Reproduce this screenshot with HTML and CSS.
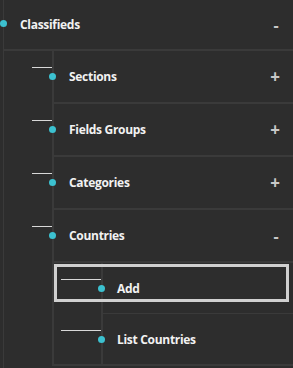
FILE: index.html
```html
<!DOCTYPE html>
<html>
<head>
    <title>Classifieds</title>
    <link rel="stylesheet" href="styles.css">
</head>
<body>
    <ul class="tree">
        <li class="node top">
            <div class="row">
                <span class="dot"></span>
                <span class="label">Classifieds</span>
                <span class="toggle minus">-</span>
            </div>
            <ul class="sub level1">
                <li class="node">
                    <div class="row">
                        <span class="link"></span><span class="dot"></span>
                        <span class="label">Sections</span>
                        <span class="toggle">+</span>
                    </div>
                </li>
                <li class="node">
                    <div class="row">
                        <span class="link"></span><span class="dot"></span>
                        <span class="label">Fields Groups</span>
                        <span class="toggle">+</span>
                    </div>
                </li>
                <li class="node">
                    <div class="row">
                        <span class="link"></span><span class="dot"></span>
                        <span class="label">Categories</span>
                        <span class="toggle">+</span>
                    </div>
                </li>
                <li class="node open">
                    <div class="row">
                        <span class="link"></span><span class="dot"></span>
                        <span class="label">Countries</span>
                        <span class="toggle minus">-</span>
                    </div>
                    <ul class="sub level2">
                        <li class="node">
                            <div class="row active">
                                <span class="link"></span><span class="dot"></span>
                                <span class="label">Add</span>
                            </div>
                        </li>
                        <li class="node last">
                            <div class="row">
                                <span class="link"></span><span class="dot"></span>
                                <span class="label">List Countries</span>
                            </div>
                        </li>
                    </ul>
                </li>
            </ul>
        </li>
    </ul>
</body>
</html>
```

FILE: styles.css
```css
body {
    margin: 0;
    background-color: #2d2d2d;
    font-family: "Open Sans", Arial, sans-serif;
    color: #f2f2f2;
    min-height: 368px;
}

ul {
    list-style: none;
    margin: 0;
    padding: 0;
}

.row {
    position: relative;
    display: flex;
    align-items: center;
    font-size: 12px;
    font-weight: bold;
}

.label {
    flex: 1;
    letter-spacing: -0.3px;
}

.toggle {
    color: #c8c8c8;
    font-size: 17px;
    width: 12px;
    text-align: center;
    margin-right: 12px;
}

.toggle.minus {
    font-size: 16px;
    margin-right: 11px;
}

.dot {
    position: absolute;
    width: 7px;
    height: 7px;
    border-radius: 50%;
    background-color: #3cc1d0;
}

.link {
    position: absolute;
    top: 16px;
    height: 1px;
    background-color: #d8d8d8;
}

/* top level */
.tree {
    min-height: 368px;
}

.top {
    margin-left: 3px;
    border-left: 1px solid #3a3a3a;
    min-height: 368px;
}

.top > .row {
    height: 49px;
    padding-left: 16px;
    border-bottom: 2px solid #3a3a3a;
}

.top > .row .dot {
    left: -4px;
    top: 20px;
}

/* first level */
.level1 {
    padding-left: 48px;
}

.level1 > .node {
    border-left: 2px solid #3a3a3a;
    border-bottom: 2px solid #3a3a3a;
}

.level1 > .node > .row {
    height: 51px;
    padding-left: 15px;
}

.level1 > .open > .row {
    border-bottom: 2px solid #3a3a3a;
}

.level1 .dot {
    left: -5px;
    top: 22px;
}

.level1 .link {
    left: -22px;
    width: 20px;
}

/* second level */
.level2 {
    padding-left: 47px;
}

.level2 > .node {
    border-left: 2px solid #3a3a3a;
    border-bottom: 1px solid #3a3a3a;
}

.level2 > .last {
    border-bottom: none;
}

.level2 > .node > .row {
    height: 50px;
    padding-left: 14px;
}

.level2 .link {
    left: -42px;
    width: 40px;
}

.row.active::after {
    content: "";
    position: absolute;
    left: -49px;
    top: 1px;
    width: 235px;
    height: 38px;
    box-sizing: border-box;
    border: 3px solid #d0d0d0;
}
```
